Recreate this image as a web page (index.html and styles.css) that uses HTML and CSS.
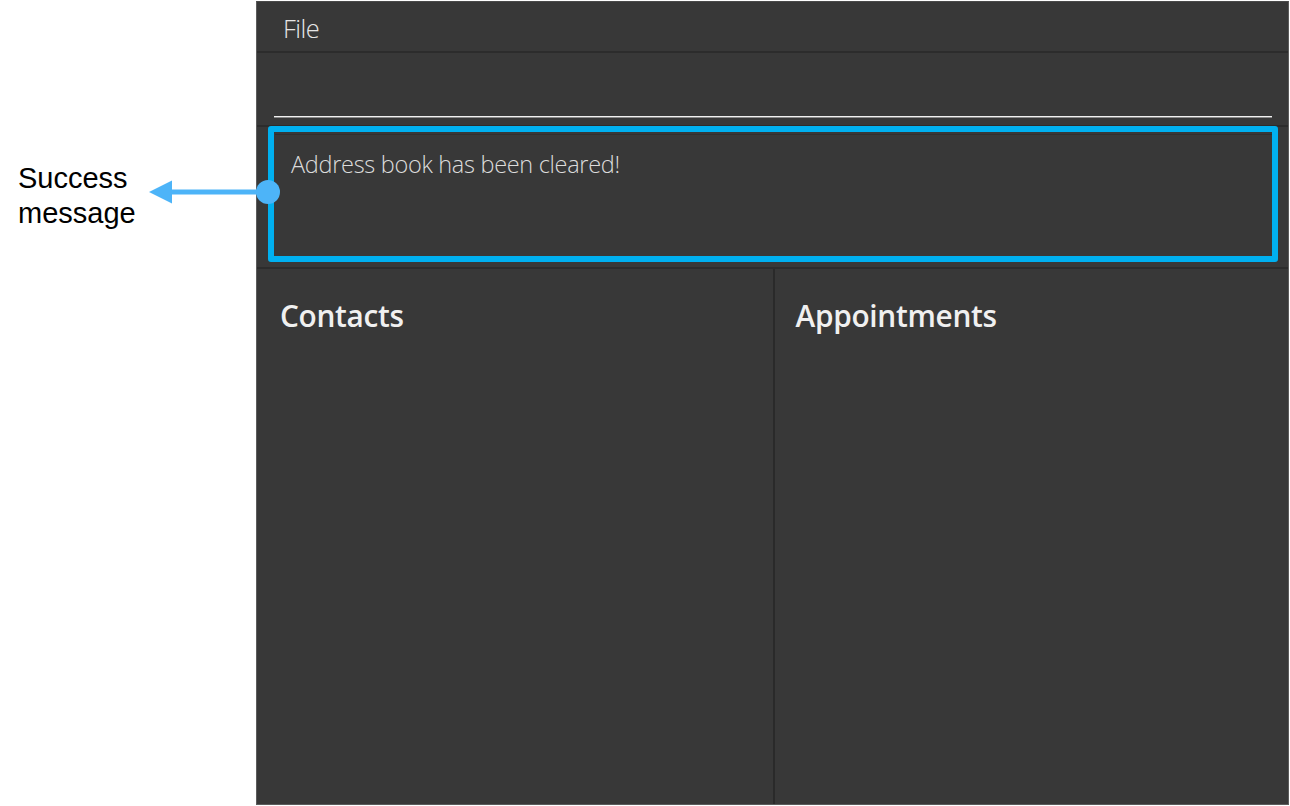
FILE: index.html
```html
<!DOCTYPE html>
<html>
<head>
<meta charset="utf-8">
<link rel="stylesheet" href="styles.css">
</head>
<body>
<div class="page">
  <aside class="annotation">
    <div class="note">Success<br>message</div>
  </aside>
  <main class="window">
    <div class="menubar"><span class="menu-item">File</span></div>
    <div class="command">
      <div class="command-input"></div>
    </div>
    <div class="result">
      <div class="result-text">Address book has been cleared!</div>
    </div>
    <div class="panels">
      <section class="panel"><h2 class="panel-title">Contacts</h2></section>
      <section class="panel panel-right"><h2 class="panel-title">Appointments</h2></section>
    </div>
  </main>
  <div class="highlight"></div>
  <svg class="pointer" width="140" height="30" viewBox="0 0 140 30">
    <polygon points="0,15 23,3.5 23,26.5" fill="#4db4f8"/>
    <rect x="20" y="12.5" width="100" height="5" fill="#4db4f8"/>
    <circle cx="119" cy="15" r="12" fill="#4db4f8"/>
  </svg>
</div>
</body>
</html>
```
FILE: styles.css
```css
html, body {
  margin: 0;
  padding: 0;
  background: #ffffff;
}
.page {
  position: relative;
  width: 1290px;
  height: 806px;
  display: flex;
  overflow: hidden;
}
.annotation {
  width: 256px;
  flex: none;
  padding-top: 161px;
  padding-left: 18px;
  box-sizing: border-box;
}
.note {
  font-family: "Liberation Sans", Arial, sans-serif;
  font-size: 29px;
  line-height: 35px;
  color: #000;
}
.window {
  width: 1033px;
  height: 804px;
  margin-top: 1px;
  border: 1px solid #5c5c5c;
  border-top-color: #4a4a4a;
  background: #383838;
  display: flex;
  flex-direction: column;
  box-sizing: border-box;
  font-family: "Open Sans", "Noto Sans", sans-serif;
}
.menubar {
  height: 51px;
  flex: none;
  border-bottom: 2px solid #2c2c2c;
  box-sizing: border-box;
  display: flex;
  align-items: center;
  padding-left: 26px;
  padding-top: 2px;
}
.menu-item {
  font-size: 25.5px;
  font-weight: 300;
  color: #e6e6e6;
  letter-spacing: -0.5px;
}
.command {
  height: 74px;
  flex: none;
  border-bottom: 2px solid #2c2c2c;
  box-sizing: border-box;
  padding: 0 16px 7px 17px;
  display: flex;
  align-items: flex-end;
}
.command-input {
  flex: 1;
  height: 1px;
  background: #f0f0f0;
  border-bottom: 1px solid #8a8a8a;
}
.result {
  height: 142px;
  flex: none;
  border-bottom: 2px solid #2c2c2c;
  box-sizing: border-box;
  padding: 7px 12px 8px 18px;
  display: flex;
}
.result-text {
  flex: 1;
  border-top: 1px solid #2f2f2f;
  padding: 13px 0 0 16px;
  font-size: 23.5px;
  font-weight: 300;
  color: #dcdcdc;
  letter-spacing: -0.3px;
}
.panels {
  flex: 1;
  display: flex;
}
.panel {
  flex: 1;
  padding: 26px 0 0 23px;
}
.panel-right {
  border-left: 2px solid #2a2a2a;
  padding-left: 21px;
}
.panel-title {
  margin: 0;
  font-size: 29.8px;
  font-weight: 600;
  color: #f0f0f0;
  letter-spacing: -0.3px;
}
.highlight {
  position: absolute;
  left: 268px;
  top: 126px;
  width: 1010px;
  height: 136px;
  border: 6px solid #00b0f0;
  border-radius: 3px;
  box-sizing: border-box;
}
.pointer {
  position: absolute;
  left: 149px;
  top: 177px;
}
```
